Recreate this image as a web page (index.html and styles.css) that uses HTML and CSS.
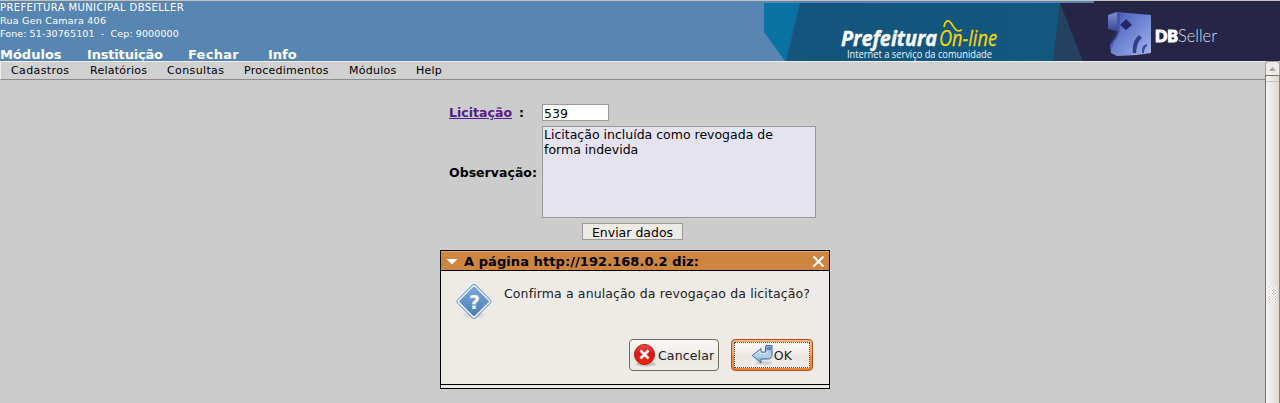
FILE: index.html
```html
<!DOCTYPE html>
<html lang="pt-BR">
<head>
<meta charset="utf-8">
<title>DBSeller</title>
<link rel="stylesheet" href="styles.css">
</head>
<body>
<header class="header">
  <div class="org">
    <div class="org-line name">PREFEITURA MUNICIPAL DBSELLER</div>
    <div class="org-line address">Rua Gen Camara 406</div>
    <div class="org-line">Fone: 51-30765101&nbsp; -&nbsp; Cep: 9000000</div>
    <nav class="topnav"><span>Módulos</span><span>Instituição</span><span>Fechar</span><span>Info</span></nav>
  </div>
  <svg class="banner" width="516" height="60" viewBox="764 1 516 60">
    <defs>
      <linearGradient id="cube" x1="0" y1="0" x2="1" y2="1"><stop offset="0" stop-color="#4055b4"/><stop offset=".55" stop-color="#7489d5"/><stop offset="1" stop-color="#a4b5e9"/></linearGradient>
      <linearGradient id="side" x1="0" y1="0" x2="0" y2="1"><stop offset="0" stop-color="#7c91d4"/><stop offset="1" stop-color="#354392"/></linearGradient>
      <linearGradient id="teal" x1="0" x2="1"><stop offset="0" stop-color="#14547d"/><stop offset="1" stop-color="#12587f"/></linearGradient>
    </defs>
    <path fill="#0a72a2" d="M764 3h37l-14 58h-2l-21-29z"/>
    <path fill="url(#teal)" d="M800 3h266v58H786z"/>
    <path fill="#24415f" d="M1060 3h34v58h-41z"/>
    <path fill="#262547" d="M1060 3h34V1h186v60H1083z"/>
    <g class="humanist">
      <text x="841" y="46" font-size="20.500" font-weight="bold" font-style="italic" textLength="96" lengthAdjust="spacingAndGlyphs" fill="#fff" stroke="#fff" stroke-width=".4">Prefeitura</text>
      <text x="939" y="46" font-size="22" font-style="italic" textLength="58" lengthAdjust="spacingAndGlyphs" fill="#f2d50a" stroke="#f2d50a" stroke-width=".3">On-line</text>
      <text x="847" y="58" font-size="10" textLength="145" lengthAdjust="spacingAndGlyphs" fill="#f0f5f8">Internet a serviço da comunidade</text>
    </g>
    <path d="M944 27c1-6 4-8 7-4s4 8 8 8l3-1" fill="none" stroke="#f2d50a" stroke-width="1.700"/>
    <path fill="url(#side)" d="M1108 15l9-3 9 4v13l-8 3-10-3z"/>
    <path fill="url(#cube)" d="M1117 12l34 3v38l-14 2-20 1-6-3-1-8c6-8 8-9 8-18z"/>
    <path fill="#303a8a" d="M1117 12l3 3v14c0 8-8 13-8 21l-2-5c0-8 7-12 7-18z" opacity=".4"/>
    <path fill="#292368" d="M1126 19l6 6-6 5-6-5z"/>
    <path fill="#343c90" d="M1133 53c-1-7 1-14 6-18l3 3c-4 3-5 7-6 15z"/>
    <path fill="#3d489e" d="M1142 53c0-6 1-8 5-9v2c-2 1-3 4-3 7z"/>
    <g class="geometric">
      <text x="1155" y="42" font-size="17" font-weight="900" textLength="23" lengthAdjust="spacingAndGlyphs" fill="#fff" stroke="#fff" stroke-width="1.100">DB</text>
      <text x="1178" y="42" font-size="18" font-weight="300" textLength="39" lengthAdjust="spacingAndGlyphs" fill="#dedeea">Seller</text>
    </g>
  </svg>
</header>
<div class="workspace">
  <div class="page">
    <nav class="menu"><span>Cadastros</span><span>Relatórios</span><span>Consultas</span><span>Procedimentos</span><span>Módulos</span><span>Help</span></nav>
    <main class="form">
      <div class="label"><a href="#">Licitação</a><span class="colon">:</span></div>
      <div class="field code">539</div>
      <div class="label">Observação:</div>
      <div class="field notes">Licitação incluída como revogada de<br>forma indevida</div>
      <div class="send">Enviar dados</div>
    </main>
    <section class="dialog">
      <div class="titlebar">
        <svg width="12" height="7" viewBox="0 0 12 7"><path fill="#fff" d="M.5 1h11L6 6.500z"/></svg>
        <span class="title">A página http://192.168.0.2 diz:</span>
        <svg width="13" height="13" viewBox="0 0 13 13"><path stroke="#fff" stroke-width="2.200" d="M1.500 1.500l10 10m0-10l-10 10"/></svg>
      </div>
      <div class="dialog-body">
        <svg class="question" width="38" height="38" viewBox="0 0 38 38">
          <defs><linearGradient id="q" x1="0" y1="0" x2="1" y2="1"><stop offset="0" stop-color="#7faada"/><stop offset="1" stop-color="#477bb9"/></linearGradient>
          <radialGradient id="shade"><stop offset="0" stop-color="#aaa7a3"/><stop offset="1" stop-color="#eeeae6" stop-opacity="0"/></radialGradient></defs>
          <ellipse cx="19" cy="32" rx="16" ry="5" fill="url(#shade)"/>
          <rect x="6.300" y="5.800" width="25.400" height="25.400" rx="2.500" transform="rotate(45 19 18.500)" fill="#fff" stroke="#6c94c6"/>
          <rect x="8.500" y="8" width="21" height="21" rx="1" transform="rotate(45 19 18.500)" fill="url(#q)" stroke="#5a87bf" stroke-width=".8"/>
          <text class="mark" x="19.500" y="25.500" text-anchor="middle" font-size="19" font-weight="bold" fill="#fff">?</text>
        </svg>
        <p class="message">Confirma a anulação da revogaçao da licitação?</p>
        <div class="actions">
          <div class="button cancel">
            <svg width="24" height="26" viewBox="0 0 24 26">
              <defs><linearGradient id="red" x1="0" y1="0" x2="0" y2="1"><stop offset="0" stop-color="#e8504c"/><stop offset=".45" stop-color="#d91717"/><stop offset="1" stop-color="#f22807"/></linearGradient></defs>
              <ellipse cx="12" cy="22" rx="10" ry="2.500" fill="#c5c1bd"/>
              <circle cx="10.500" cy="12.500" r="10" fill="url(#red)" stroke="#b50d0d"/>
              <path stroke="#fff" stroke-width="2.600" d="M6.500 8.500l8 8m0-8l-8 8"/>
            </svg><span>Cancelar</span>
          </div>
          <div class="button ok"><div class="focus">
            <svg width="22" height="22" viewBox="0 0 22 22">
              <defs><linearGradient id="arrow" x1="0" y1="0" x2="0" y2="1"><stop offset="0" stop-color="#8db3da"/><stop offset=".6" stop-color="#b4d2ed"/><stop offset="1" stop-color="#6f9cca"/></linearGradient></defs>
              <ellipse cx="12" cy="19" rx="8" ry="2" fill="#d2ceca"/>
              <path fill="url(#arrow)" stroke="#386ba7" stroke-linejoin="round" d="M.3 11.500L9 4.500v3.500h4.500V3q0-1.500 1.500-1.500h5v9q0 4.500-4.500 4.500H9v4z"/>
              <path d="M2.500 11.500L8 6.700v2.800h6q1.700 0 1.700-2" fill="none" stroke="#e4eff8" stroke-width=".9"/>
              <path d="M14.500 3H19v3h-4.500z" fill="#5b8bc2"/>
            </svg><span>OK</span></div>
          </div>
        </div>
      </div>
      <div class="dialog-foot"></div>
    </section>
  </div>
  <aside class="scrollbar">
    <div class="up"><svg width="7" height="4" viewBox="0 0 7 4"><path fill="#aaa5a0" d="M3.500 0L7 4H0z"/></svg></div>
    <div class="thumb"><div class="grip"></div></div>
  </aside>
</div>
</body>
</html>
```
FILE: styles.css
```css
* { box-sizing: border-box; }
body { margin: 0; height: 403px; overflow: hidden; background: #ccc; font-family: "DejaVu Sans", sans-serif; color: #000; }
svg { display: block; flex: none; }
.header { display: flex; justify-content: space-between; height: 61px; border-top: 1px solid #c7c0b5; background: #5786b2; color: #fff; }
.org { white-space: nowrap; }
.org-line { font-size: 9.500px; line-height: 13px; letter-spacing: .1px; }
.org-line.name { height: 13px; font-size: 10px; line-height: 14px; letter-spacing: .38px; }
.org-line.address { letter-spacing: .25px; }
.topnav { display: grid; grid-template-columns: 87px 101px 80px auto; margin-top: 6px; font-size: 13px; font-weight: bold; line-height: 18px; }
.topnav span:nth-child(2) { letter-spacing: -.18px; }
.topnav span:nth-child(3) { letter-spacing: .25px; }
.humanist { font-family: "Open Sans", "Noto Sans", sans-serif; }
.geometric { font-family: Lato, sans-serif; }
.workspace { display: flex; height: 342px; }
.page { width: 1265px; }
.menu { display: grid; grid-template-columns: 79px 77px 77px 105px 67px auto; height: 19px; padding-left: 10px; border: 1px solid #eee; border-right: 0; border-bottom-color: #8b8b8b; background: #d0d0d0; font-size: 11px; line-height: 17px; letter-spacing: .25px; }
.menu span:first-child, .menu span:nth-child(3) { letter-spacing: .38px; }
.form { display: grid; grid-template-columns: 93px 274px; row-gap: 5px; width: 367px; margin: 24px 0 0 449px; font-size: 12.500px; align-items: center; }
.label { font-weight: bold; letter-spacing: .03px; white-space: nowrap; }
.label a { color: #551a8b; }
.colon { margin-left: 7px; }
.field { border: 1px solid #999; padding: 1px 0 1px 1px; line-height: 15px; white-space: nowrap; }
.code { width: 67px; height: 17px; background: #fff; letter-spacing: .1px; }
.notes { height: 92px; padding-top: 0; background: #e6e3f1; }
.send { width: 101px; height: 17px; margin-left: 133px; border: 1px solid #999; background: #eeebe6; line-height: 18px; text-align: center; white-space: nowrap; }
.dialog { width: 390px; height: 139px; margin: 10px 0 0 440px; border: 1px solid #000; background: #eeebe7; }
.titlebar { display: flex; align-items: center; height: 20px; padding: 0 4px 0 5px; border-top: 1px solid #dea468; border-bottom: 1px solid #000; background: #cd853f; font-size: 13px; letter-spacing: .07px; font-weight: bold; }
.title { flex: 1; margin-left: 6px; line-height: 17px; white-space: nowrap; }
.dialog-body { display: grid; grid-template-columns: 48px 1fr; grid-template-rows: 56px 32px; height: 113px; padding: 12px 16px 13px 14px; }
.message { margin: 2px 0 0 1px; font-size: 12.500px; line-height: 17px; letter-spacing: .12px; color: #222; white-space: nowrap; }
.actions { grid-column: 1 / -1; display: flex; justify-content: flex-end; gap: 12px; }
.button { display: flex; align-items: center; height: 32px; border: 1px solid #75695d; border-radius: 4px; background: linear-gradient(#faf8f6, #eeebe7 50%, #e9e5e1 50%, #f1eeea); color: #222; font-size: 12.500px; letter-spacing: .13px; line-height: 17px; }
.cancel { width: 90px; padding-left: 4px; }
.ok { width: 82px; padding: 2px; border-color: #a45728; background: linear-gradient(#ffb27d, #f99d61 50%, #f58232 50%, #f58232); }
.focus { display: flex; align-items: center; justify-content: center; width: 100%; height: 100%; border: 1px dotted #444; background: linear-gradient(#faf8f6, #eeebe7 50%, #e9e5e1 50%, #f1eeea); }
.dialog-foot { height: 4px; border-top: 1px solid #000; background: #eeebe7; }
.mark { font-family: "DejaVu Sans", sans-serif; }
.scrollbar { width: 15px; height: 342px; }
.up { display: grid; place-items: center; height: 14px; border: 1px solid #aaa097; border-bottom: 0; border-radius: 4px 4px 0 0; background: #eeeae5; }
.thumb { height: 328px; padding: 210px 0 0 2px; border: 1px solid #7c7065; border-right-color: #8c8177; border-bottom: 0; background: linear-gradient(#c9c2bb, #c9c2bb) 0 5px / 100% 1px no-repeat, linear-gradient(90deg, #f6f4f2, #dfd8d3); }
.grip { width: 9px; height: 18px; background: radial-gradient(circle, #bdb6b0 0 .7px, #fff .8px 1.300px, transparent 1.400px) 0 0 / 3px 3px; }
```
